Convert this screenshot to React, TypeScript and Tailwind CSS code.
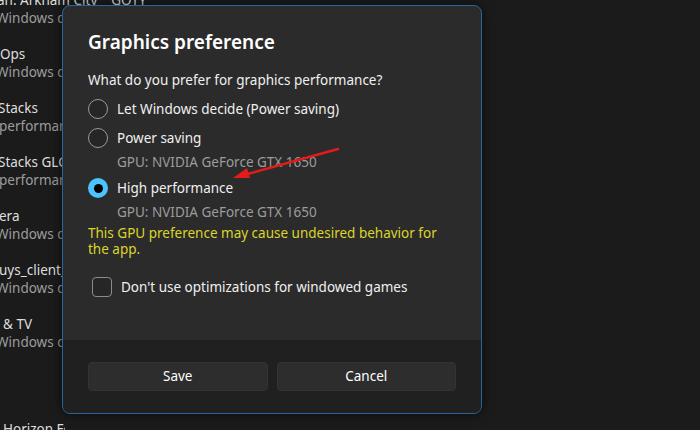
import React from 'react';

const font = { fontFamily: '"Noto Sans", "Open Sans", Arial, sans-serif' };

const apps = [
    { title: 'an: Arkham City™ GOTY', sub: 'Windows decides (Power saving)', tOff: '-ml-[3px] w-[200px]', sOff: '-ml-[4px] w-[66px]' },
    { title: 'Ops', sub: 'Windows decides (Power saving)', tOff: 'ml-0 w-[62px]', sOff: '-ml-[4px] w-[66px]' },
    { title: 'Stacks', sub: 'performance', tOff: '-ml-[2px] w-[64px]', sOff: '-ml-[1px] w-[63px]' },
    { title: 'Stacks GLC', sub: 'performance', tOff: '-ml-[2px] w-[64px]', sOff: '-ml-[1px] w-[63px]' },
    { title: 'era', sub: 'Windows decides (Power saving)', tOff: '-ml-[1px] w-[63px]', sOff: '-ml-[4px] w-[66px]' },
    { title: 'uys_client_win64', sub: 'Windows decides (Power saving)', tOff: '-ml-[1px] w-[63px]', sOff: '-ml-[4px] w-[66px]' },
    { title: '& TV', sub: 'Windows decides (Power saving)', tOff: 'ml-[3px] w-[59px]', sOff: '-ml-[4px] w-[66px]' },
];

const Radio = ({ checked }: { checked?: boolean }) =>
    checked ? (
        <span className="flex h-5 w-5 shrink-0 items-center justify-center rounded-full bg-[#4cc2ff]">
            <span className="h-[9px] w-[9px] rounded-full bg-black" />
        </span>
    ) : (
        <span className="h-5 w-5 shrink-0 rounded-full border border-[#9a9a9a] bg-[#262626]" />
    );

const App = () => {
    return (
        <div className="relative h-[430px] w-[700px] overflow-hidden bg-[#1b1b1b]" style={font}>
            {/* app list behind the dialog */}
            <div className="-mt-[9px] flex flex-col">
                {apps.map((a) => (
                    <div key={a.title} className="flex h-[54px] flex-col">
                        <div className={`h-[18px] overflow-hidden whitespace-nowrap text-[13.5px] leading-[18px] text-[#dedede] ${a.tOff}`}>
                            {a.title}
                        </div>
                        <div className={`h-[18px] overflow-hidden whitespace-nowrap text-[13.5px] leading-[18px] text-[#9d9d9d] ${a.sOff}`}>
                            {a.sub}
                        </div>
                    </div>
                ))}
                <div className="h-[51px]" />
                <div className="ml-[3px] h-[18px] w-[62px] overflow-hidden whitespace-nowrap text-[13.5px] leading-[18px] text-[#dedede]">
                    Horizon Forbidden West
                </div>
            </div>

            {/* dialog */}
            <div className="absolute left-[62px] top-[5px] flex h-[409px] w-[420px] flex-col overflow-hidden rounded-[8px] border border-[#2467a3] bg-[#2b2b2b] shadow-[0_0_12px_rgba(0,0,0,0.6)]">
                <div className="flex flex-1 flex-col px-[25px] pt-[22px] text-[13.5px] text-[#f0f0f0]">
                    <div className="h-[28px] text-[19px] font-semibold leading-[28px] text-white">
                        Graphics preference
                    </div>
                    <div className="mt-[14px] h-[20px] leading-[20px]">
                        What do you prefer for graphics performance?
                    </div>
                    <div className="mt-[5px] flex h-[28px] items-center gap-[9px]">
                        <Radio />
                        <span>Let Windows decide (Power saving)</span>
                    </div>
                    <div className="mt-[1px] flex h-[28px] items-center gap-[9px]">
                        <Radio />
                        <span>Power saving</span>
                    </div>
                    <div className="h-[20px] pl-[29px] leading-[20px] text-[#9c9c9c]">
                        GPU: NVIDIA GeForce GTX 1650
                    </div>
                    <div className="mt-[2px] flex h-[28px] items-center gap-[9px]">
                        <Radio checked />
                        <span>High performance</span>
                    </div>
                    <div className="h-[20px] pl-[29px] leading-[20px] text-[#9c9c9c]">
                        GPU: NVIDIA GeForce GTX 1650
                    </div>
                    <div className="mt-[3px] w-[360px] leading-[16px] text-[#dcd42a]">
                        This GPU preference may cause undesired behavior for the app.
                    </div>
                    <div className="mt-[16px] flex h-[28px] items-center gap-[9px] pl-[4px]">
                        <span className="h-5 w-5 shrink-0 rounded-[4px] border border-[#8c8c8c] bg-[#262626]" />
                        <span>Don't use optimizations for windowed games</span>
                    </div>
                </div>
                <div className="flex h-[73px] gap-[9px] bg-[#202020] px-[25px] pt-[22px]">
                    <button className="h-[29px] flex-1 rounded-[4px] border border-[#333333] bg-[#2d2d2d] text-[13.5px] text-white">
                        Save
                    </button>
                    <button className="h-[29px] flex-1 rounded-[4px] border border-[#333333] bg-[#2d2d2d] text-[13.5px] text-white">
                        Cancel
                    </button>
                </div>
            </div>

            {/* red annotation arrow */}
            <svg className="absolute left-0 top-0" width="700" height="430" viewBox="0 0 700 430">
                <line x1="338" y1="149" x2="244" y2="175" stroke="#e31b1b" strokeWidth="2.5" strokeLinecap="round" />
                <polygon points="233,178 247,168 250,178" fill="#e31b1b" />
            </svg>
        </div>
    );
};

export default App;
